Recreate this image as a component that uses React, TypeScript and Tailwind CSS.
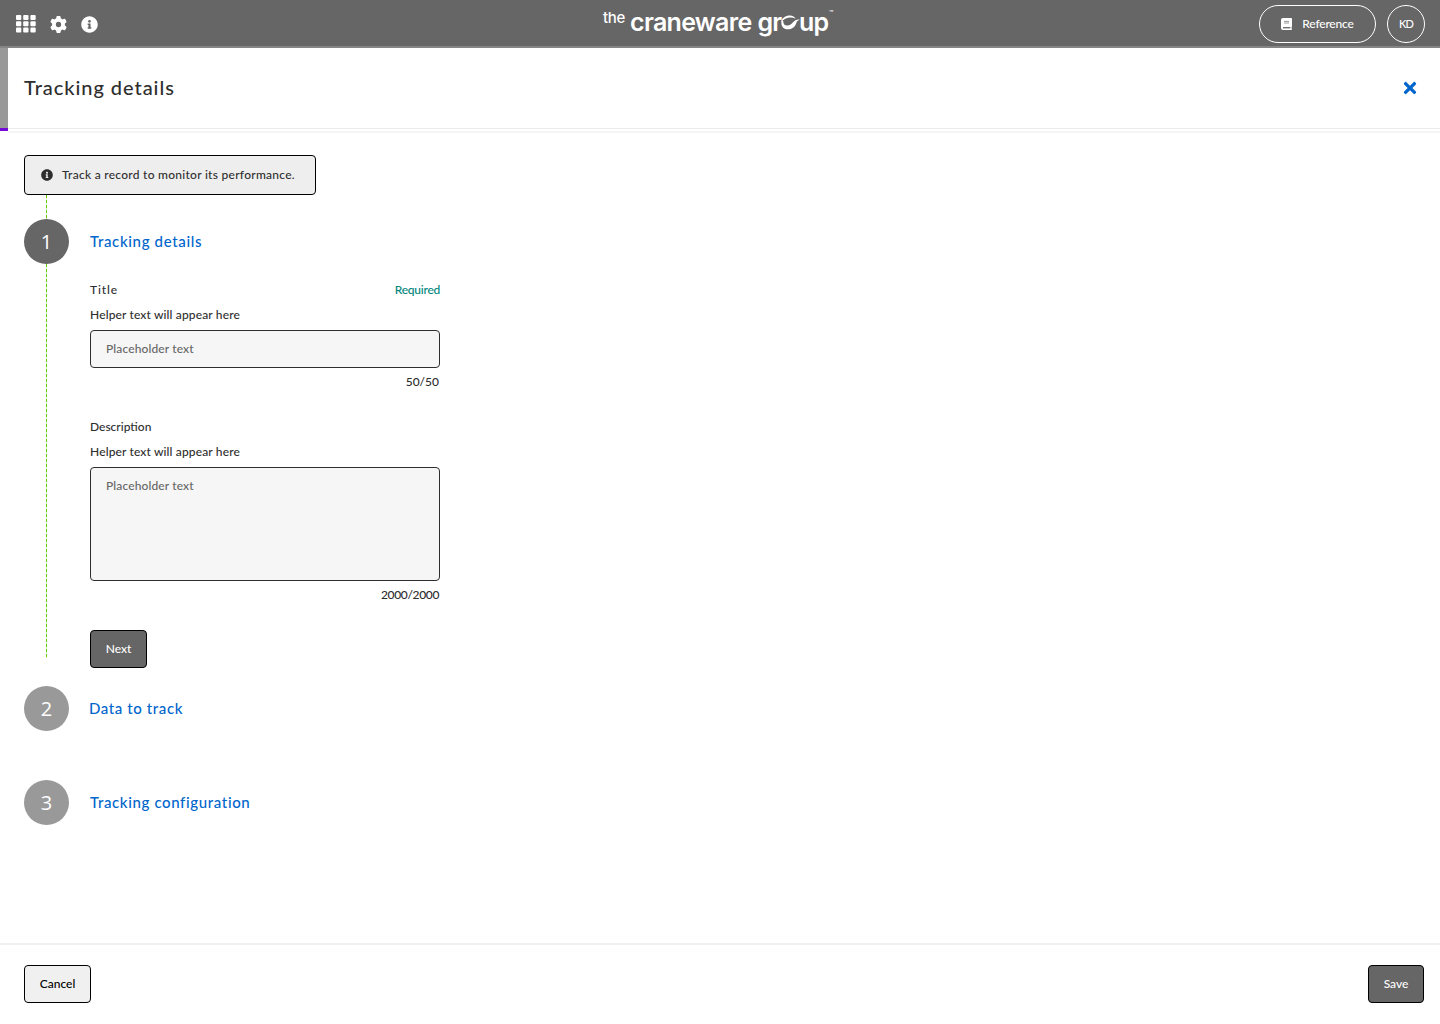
import React, { useState } from 'react'
import { FaInfoCircle, FaTimes } from 'react-icons/fa'
import { FaGear } from 'react-icons/fa6'

interface Step {
  id: number
  title: string
  titleClass: string
}

const otherSteps: Step[] = [
  { id: 2, title: 'Data to track', titleClass: '-ml-px tracking-[0.6px]' },
  { id: 3, title: 'Tracking configuration', titleClass: 'tracking-[0.63px]' },
]

const GridIcon = () => (
  <svg width="20" height="18" viewBox="0 0 20 18" fill="currentColor">
    {[0, 7.2, 14.4].map((x) =>
      [0, 6.3, 12.6].map((y) => (
        <rect key={`${x}-${y}`} x={x} y={y} width="5.3" height="5" rx="1" />
      ))
    )}
  </svg>
)

const BookIcon = () => (
  <svg width="11" height="12" viewBox="0 0 11 12">
    <path
      fill="#fff"
      fillRule="evenodd"
      d="M2 0h8.2q.8 0 .8.8v7.4q0 .5-.4.7v1.6q.4.1.4.7 0 .8-.8.8H2Q0 12 0 10V2Q0 0 2 0Z"
    />
    <path d="M3 3.4h5M3 5h5" stroke="#999" strokeWidth="1" />
    <path d="M2 9.7h7.4" stroke="#666" strokeWidth="1.3" />
  </svg>
)

const Logo = () => (
  <div className="relative -left-[2px] flex h-[30px] items-start whitespace-nowrap text-white font-['Inter']">
    <span className="mt-[1px] text-[15px] leading-[16px] tracking-[-0.3px]">the</span>
    <div className="ml-[5px] flex items-start text-[25px] leading-[26px] font-semibold">
      <span className="tracking-[-0.7px]">craneware</span>
      <span className="ml-[6px] tracking-[-1px]">gr</span>
      {/* swoosh standing in for the "o" */}
      <svg className="mt-[6px] -ml-px" width="20" height="15" viewBox="0 0 19 14" fill="currentColor">
        <path d="M.8 6.800C1.800 2.500 5.600.300 9.400.400c2.800.1 4.600 1.200 5.400 3C13 2.500 11 2.100 9 2.300 5.800 2.600 3.300 4.200.800 6.800Z" />
        <path d="M1.600 5.600C.3 10.500 3.400 13.600 7.600 13.500c4.600-.1 7.200-3.400 8.100-6.600.5-1.200 1.500-2 3.100-2.800-1.800-.2-3.700.3-5.100 1.400-1.800 1.400-3.400 4-6.300 4.400C4.600 10.300 3.200 8.700 3 5.600Z" />
      </svg>
      <span className="-ml-px tracking-[-1px]">up</span>
    </div>
    <span className="ml-px mt-px w-[5px] text-[7px] leading-[8px]">™</span>
  </div>
)

interface FieldLabelProps {
  label: string
  labelClass?: string
  required?: boolean
}

const FieldLabel: React.FC<FieldLabelProps> = ({ label, labelClass, required }) => (
  <>
    <div className="flex h-5 items-center justify-between">
      <label className={labelClass}>{label}</label>
      {required && <span className="tracking-[-0.25px] text-[#00857c]">Required</span>}
    </div>
    <p className="mt-[5px] h-5 leading-5 tracking-[0.14px]">Helper text will appear here</p>
  </>
)

const StepCircle = ({ id, active }: { id: number; active?: boolean }) => (
  <div
    className={`flex size-[45px] shrink-0 items-center justify-center rounded-full font-['Open_Sans'] text-[20px] font-normal text-white ${
      active ? 'bg-[#666]' : 'bg-[#999]'
    }`}
  >
    {id}
  </div>
)

const DashedLine = ({ className }: { className: string }) => (
  <div
    className={`w-px bg-[repeating-linear-gradient(to_bottom,#6c0_0_3px,#dcf4c2_3px_5px)] ${className}`}
  />
)

const App = () => {
  const [title, setTitle] = useState('')
  const [description, setDescription] = useState('')

  return (
    <div className="flex h-screen w-full flex-col overflow-hidden bg-white font-['Lato',sans-serif] text-[12px] font-medium text-[#2e2e2e]">
      {/* Top bar */}
      <header className="grid h-12 shrink-0 grid-cols-3 items-center bg-[#666] pr-[15px] pl-4 text-white shadow-[inset_0_-2px_0_#858585]">
        <div className="flex items-center gap-[14px]">
          <GridIcon />
          <FaGear size={17} />
          <FaInfoCircle size={17} />
        </div>
        <div className="flex justify-center">
          <Logo />
        </div>
        <div className="flex items-center justify-end gap-[11px]">
          <button className="flex h-[38px] w-[117px] items-center justify-center gap-[10px] rounded-full border border-white">
            <BookIcon />
            <span className="tracking-[-0.2px]">Reference</span>
          </button>
          <button className="size-[38px] rounded-full border border-white text-[11px] tracking-[-0.8px]">
            KD
          </button>
        </div>
      </header>

      {/* Panel heading */}
      <div className="flex h-[85px] shrink-0">
        <div className="h-[83px] w-2 border-b-[3px] border-[#7209d4] bg-[#999]" />
        <div className="flex-1 border-b-2 border-[#f5f5f5]">
          <div className="flex h-[81px] items-center justify-between border-b border-[#ebebeb] pr-6 pl-4">
            <h1 className="pb-[3px] text-[20px] tracking-[0.95px]">Tracking details</h1>
            <FaTimes size={18} className="-mr-[3px] text-[#06c]" />
          </div>
        </div>
      </div>

      <main className="flex-1 px-6 pt-[22px]">
        <div className="flex h-10 w-[292px] items-center gap-[9px] rounded-[4px] border border-black bg-[#eee] pl-4">
          <FaInfoCircle size={12} />
          <span className="tracking-[0.27px]">Track a record to monitor its performance.</span>
        </div>
        <DashedLine className="ml-[22px] h-6" />

        {/* Step 1 */}
        <section className="flex">
          <div className="flex w-[45px] flex-col items-center">
            <StepCircle id={1} active />
            <DashedLine className="h-[394px]" />
          </div>
          <div className="ml-[21px] w-[350px]">
            <h2 className="h-[45px] text-[15px] leading-[45px] tracking-[0.65px] text-[#06c]">
              Tracking details
            </h2>
            <div className="mt-4">
              <FieldLabel label="Title" labelClass="tracking-[0.9px]" required />
              <input
                className="mt-[5px] block h-[38px] w-full rounded-[4px] border border-[#2e2e2e] bg-[#f6f6f6] px-[15px] pb-0.5 tracking-[0.12px] placeholder:text-[#666]"
                placeholder="Placeholder text"
                value={title}
                onChange={(e) => setTitle(e.target.value)}
              />
              <p className="mt-1 h-5 pr-px text-right leading-5">{50 - title.length}/50</p>
            </div>
            <div className="mt-[25px]">
              <FieldLabel label="Description" />
              <textarea
                className="mt-[5px] block h-[114px] w-full resize-none rounded-[4px] border border-[#2e2e2e] bg-[#f6f6f6] px-[15px] py-2 leading-5 tracking-[0.12px] placeholder:text-[#666]"
                placeholder="Placeholder text"
                value={description}
                onChange={(e) => setDescription(e.target.value)}
              />
              <p className="mt-1 h-5 pr-px text-right leading-5 tracking-[-0.35px]">
                {2000 - description.length}/2000
              </p>
            </div>
            <button className="mt-[25px] block h-[38px] w-[57px] rounded-[4px] border border-black bg-[#666] text-white">
              Next
            </button>
          </div>
        </section>

        <div className="mt-[18px] flex flex-col gap-[49px]">
          {otherSteps.map((step) => (
            <div key={step.id} className="flex items-center gap-[21px]">
              <StepCircle id={step.id} />
              <h2 className={`text-[15px] text-[#06c] ${step.titleClass}`}>{step.title}</h2>
            </div>
          ))}
        </div>
      </main>

      <footer className="flex h-[81px] shrink-0 items-center justify-between border-t-2 border-[#f0f0f0] pr-4 pb-px pl-6">
        <button className="h-[38px] w-[67px] rounded-[4px] border border-black bg-[#f0f0f0] text-black">
          Cancel
        </button>
        <button className="h-[38px] w-14 rounded-[4px] border border-black bg-[#666] text-white">
          Save
        </button>
      </footer>
    </div>
  )
}

export default App
